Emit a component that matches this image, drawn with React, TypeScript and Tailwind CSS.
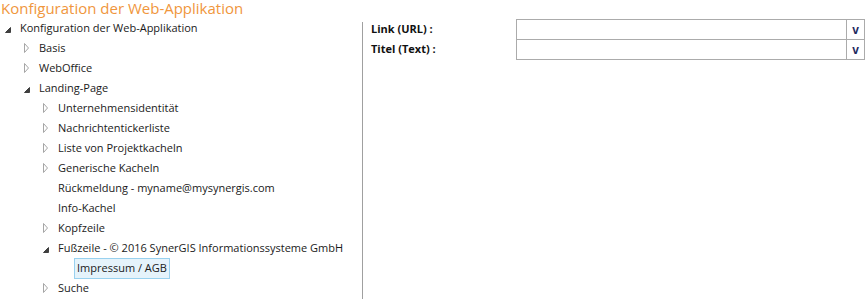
import React from "react";

type Node = { label: string; level: number; state: "open" | "closed" | "leaf"; selected?: boolean };

const nodes: Node[] = [
  { label: "Konfiguration der Web-Applikation", level: 0, state: "open" },
  { label: "Basis", level: 1, state: "closed" },
  { label: "WebOffice", level: 1, state: "closed" },
  { label: "Landing-Page", level: 1, state: "open" },
  { label: "Unternehmensidentität", level: 2, state: "closed" },
  { label: "Nachrichtentickerliste", level: 2, state: "closed" },
  { label: "Liste von Projektkacheln", level: 2, state: "closed" },
  { label: "Generische Kacheln", level: 2, state: "closed" },
  { label: "Rückmeldung - myname@mysynergis.com", level: 2, state: "leaf" },
  { label: "Info-Kachel", level: 2, state: "leaf" },
  { label: "Kopfzeile", level: 2, state: "closed" },
  { label: "Fußzeile - © 2016 SynerGIS Informationssysteme GmbH", level: 2, state: "open" },
  { label: "Impressum / AGB", level: 3, state: "leaf", selected: true },
  { label: "Suche", level: 2, state: "closed" },
];

const pad = ["pl-[4px]", "pl-[23px]", "pl-[42px]", "pl-[61px]"];

function Arrow({ state }: { state: Node["state"] }) {
  if (state === "leaf") return <span className="w-[16px] shrink-0" />;
  if (state === "open")
    return (
      <svg width="16" height="20" viewBox="0 0 16 20" className="shrink-0">
        <path d="M1.5 14.5 L6.5 14.5 L6.5 9.5 Z" fill="#404040" stroke="#404040" strokeWidth="1" />
      </svg>
    );
  return (
    <svg width="16" height="20" viewBox="0 0 16 20" className="shrink-0">
      <path d="M1.5 5.5 L1.5 14.5 L5.5 10 Z" fill="none" stroke="#a6a6a6" strokeWidth="1" />
    </svg>
  );
}

export default function App() {
  return (
    <div className="w-[867px] h-[299px] bg-white overflow-hidden" style={{ fontFamily: '"Open Sans", "Noto Sans", sans-serif' }}>
      <div className="h-[18px] pl-[1px] text-[15px] leading-[17px] text-[#f0963c] whitespace-nowrap">
        Konfiguration der Web-Applikation
      </div>
      <div className="flex">
        <div className="w-[362px] shrink-0 text-[11px] text-[#1a1a1a]">
          {nodes.map((n, i) => (
            <div key={i} className={`h-[20px] flex items-center whitespace-nowrap ${pad[n.level]}`}>
              <Arrow state={n.state} />
              {n.selected ? (
                <span className="h-[21px] -ml-[3px] px-[2px] flex items-center bg-[#e5f3fb] border border-[#99d1ef]">
                  {n.label}
                </span>
              ) : (
                <span>{n.label}</span>
              )}
            </div>
          ))}
        </div>
        <div className="w-px mt-[4px] h-[277px] bg-[#a0a0a0]" />
        <div className="flex-1 pl-[8px] pt-[1px]">
          {["Link (URL) :", "Titel (Text) :"].map((l, i) => (
            <div key={i} className={`flex h-[21px] ${i === 0 ? "" : "-mt-px"}`}>
              <div className="w-[145px] flex items-center font-bold text-[11px] text-[#111]">{l}</div>
              <div className="w-[331px] border border-[#ababab] bg-white" />
              <div className="w-[19px] -ml-px border border-[#ababab] bg-white flex items-center justify-center text-[12px] font-bold text-[#1f2a60]" style={{ fontFamily: '"Liberation Sans", sans-serif' }}>
                v
              </div>
            </div>
          ))}
        </div>
      </div>
    </div>
  );
}
